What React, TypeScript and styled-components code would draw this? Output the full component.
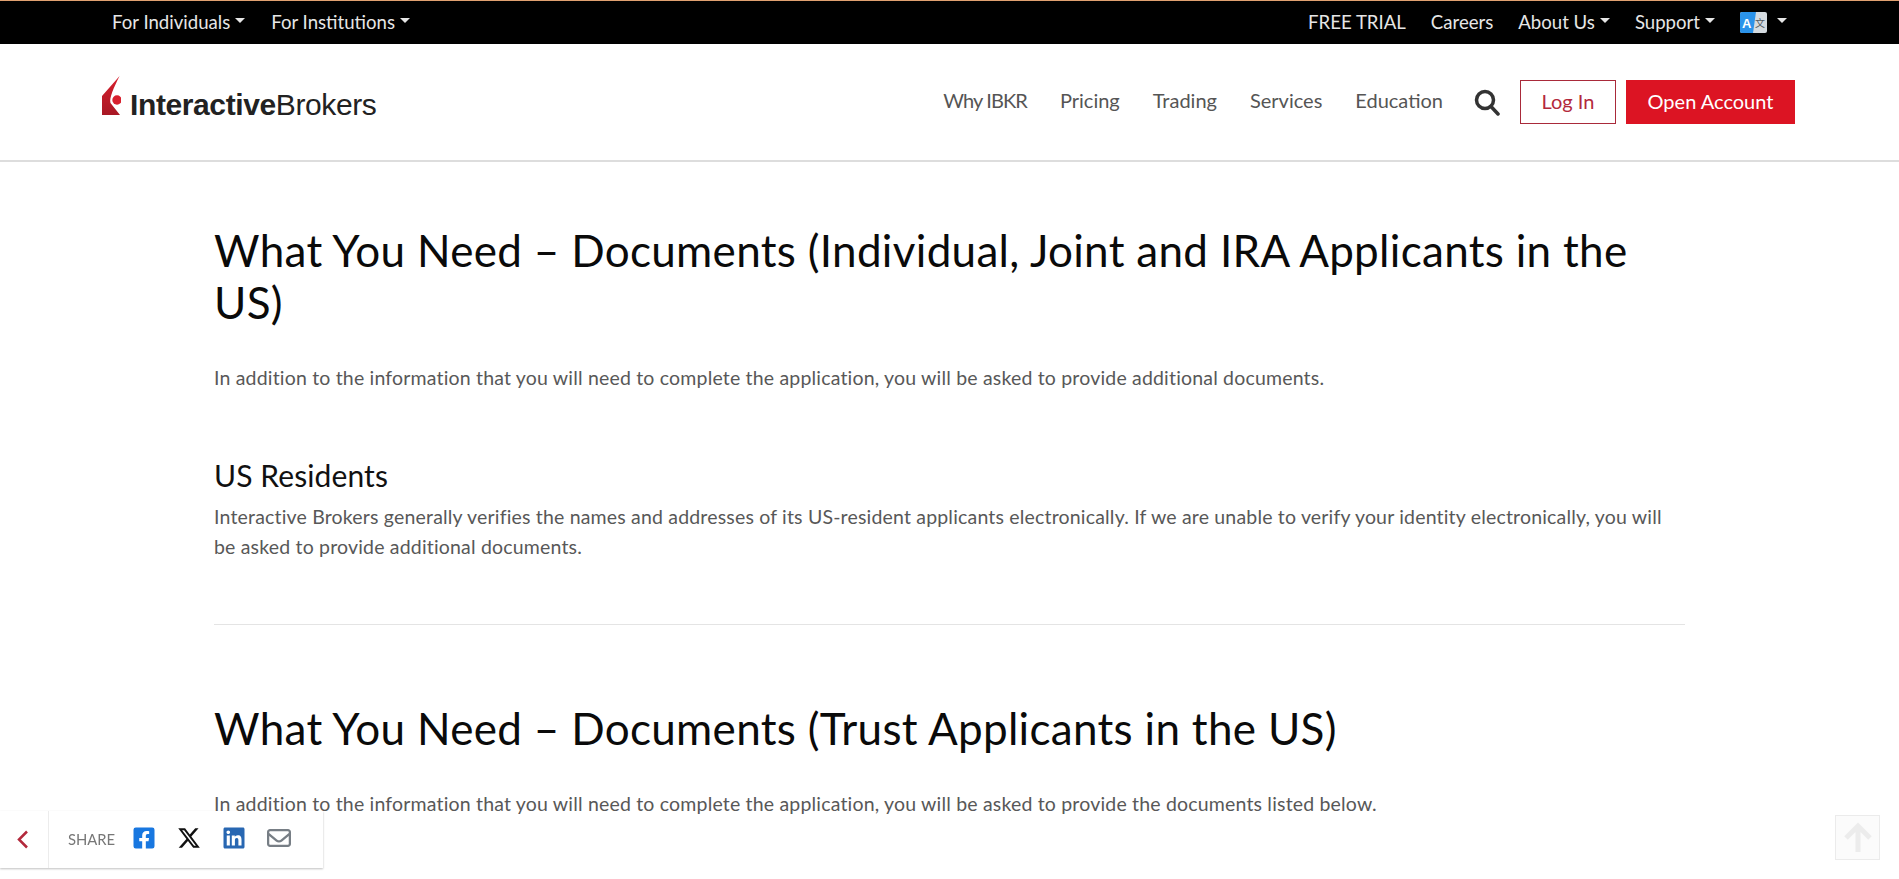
import React from "react";
import styled, { createGlobalStyle } from "styled-components";
import { FaXTwitter, FaLinkedin, FaRegEnvelope } from "react-icons/fa6";
import { FaFacebookSquare } from "react-icons/fa";

const Global = createGlobalStyle`
  html, body { margin: 0; padding: 0; height: 100%; overflow: hidden; background: #fff; }
  body { font-family: Lato, "Open Sans", sans-serif; }
  * { box-sizing: border-box; }
`;

const TopBar = styled.div`
  height: 44px;
  background: #000;
  border-top: 1px solid #e0a070;
  display: flex;
  align-items: center;
  justify-content: space-between;
  padding: 0 112px 1px 112px;
`;
const TopGroup = styled.div<{ $gap: number }>`
  display: flex;
  align-items: center;
  gap: ${(p) => p.$gap}px;
`;
const TopLink = styled.a`
  color: #e6e6e6;
  font-size: 18.6px;
  white-space: nowrap;
  display: inline-flex;
  align-items: center;
`;
const Caret = styled.span`
  display: inline-block;
  margin-left: 5px;
  margin-top: -3px;
  border-top: 5px solid currentColor;
  border-left: 5px solid transparent;
  border-right: 5px solid transparent;
`;
const LangCaret = styled(Caret)`
  color: #e6e6e6;
  margin-left: 10px;
  margin-top: -4px;
`;
const Lang = styled.span`
  display: inline-flex;
  align-items: center;
`;
const Header = styled.header`
  height: 118px;
  border-bottom: 2px solid #ddd;
  display: flex;
  align-items: center;
  justify-content: space-between;
  padding: 0 104px 1px 102px;
`;
const Logo = styled.div`
  display: flex;
  align-items: flex-end;
  gap: 9px;
  margin-top: -12px;
`;
const Wordmark = styled.span`
  font-family: "Liberation Sans", Arial, sans-serif;
  font-size: 30px;
  line-height: 30px;
  letter-spacing: -0.39px;
  color: #222;
  margin-bottom: -4.5px;
  b { font-weight: 700; }
`;
const Nav = styled.nav`
  display: flex;
  align-items: center;
`;
const NavLink = styled.a<{ $spacing?: number }>`
  color: #555;
  font-size: 20px;
  letter-spacing: ${(p) => p.$spacing ?? 0}px;
  margin-right: 33px;
  margin-bottom: 3px;
  white-space: nowrap;
`;
const SearchIcon = styled.svg`
  width: 28px;
  height: 28px;
  margin-left: -3px;
  margin-right: 19px;
  display: block;
`;
const LoginButton = styled.a`
  width: 96px;
  height: 44px;
  border: 1px solid #a92a3a;
  color: #b3293c;
  font-size: 20px;
  padding-bottom: 2px;
  display: flex;
  align-items: center;
  justify-content: center;
  margin-right: 10px;
`;
const OpenButton = styled.a`
  width: 169px;
  height: 44px;
  background: #dc1423;
  color: #fff;
  font-size: 20px;
  padding-bottom: 2px;
  display: flex;
  align-items: center;
  justify-content: center;
`;
const Main = styled.main`
  padding: 62px 214px 0 214px;
`;
const Title = styled.h1`
  margin: 0;
  font-weight: 400;
  font-size: 44px;
  line-height: 52px;
  letter-spacing: 0.31px;
  color: #0a0a0a;
`;
const Para = styled.p<{ $top: number }>`
  margin: ${(p) => p.$top}px 0 0;
  font-size: 19.5px;
  letter-spacing: 0.18px;
  line-height: 30px;
  color: #585858;
`;
const SubTitle = styled.h2`
  margin: 64px 0 0;
  font-weight: 400;
  font-size: 30px;
  line-height: 36px;
  letter-spacing: 0.1px;
  color: #111;
`;
const Rule = styled.hr`
  border: 0;
  border-top: 1px solid #e4e4e4;
  margin: 62px 0 77px;
`;
const ShareBar = styled.div`
  position: fixed;
  left: 0;
  bottom: 11px;
  width: 323px;
  height: 57px;
  background: #fff;
  display: flex;
  align-items: center;
  box-shadow: 0 1px 2px rgba(0, 0, 0, 0.25);
`;
const Back = styled.div`
  width: 49px;
  height: 100%;
  border-right: 1px solid #ececec;
  display: flex;
  align-items: center;
  justify-content: center;
  margin-right: 19px;
  padding-right: 3px;
`;
const ShareLabel = styled.span`
  font-size: 14.8px;
  color: #777;
  width: 64px;
  margin-top: -2px;
`;
const ShareIcon = styled.span<{ $color: string; $w: number }>`
  color: ${(p) => p.$color};
  width: ${(p) => p.$w}px;
  display: flex;
  font-size: 24px;
  margin-top: -4px;
`;
const TopButton = styled.div`
  position: fixed;
  left: 1835px;
  top: 815px;
  width: 45px;
  height: 45px;
  border: 1px solid #ebebeb;
  background: #fbfbfb;
  display: flex;
  align-items: center;
  justify-content: center;
`;

export default function App() {
  return (
    <>
      <Global />
      <TopBar>
        <TopGroup $gap={26}>
          <TopLink>For Individuals<Caret /></TopLink>
          <TopLink>For Institutions<Caret /></TopLink>
        </TopGroup>
        <TopGroup $gap={25}>
          <TopLink>FREE TRIAL</TopLink>
          <TopLink>Careers</TopLink>
          <TopLink>About Us<Caret /></TopLink>
          <TopLink>Support<Caret /></TopLink>
          <Lang>
            <svg width="27" height="21" viewBox="0 0 27 21">
              <rect width="27" height="21" rx="2" fill="#d5dbe0" />
              <path d="M2 0H16L13 21H2a2 2 0 0 1-2-2V2a2 2 0 0 1 2-2Z" fill="#2b93ea" />
              <text x="2" y="15.500" fontFamily="Liberation Sans" fontWeight="700" fontSize="13" fill="#fff">A</text>
              <text x="15" y="14.500" fontFamily="Noto Sans CJK SC" fontSize="10" fill="#50585f">文</text>
            </svg>
            <LangCaret />
          </Lang>
        </TopGroup>
      </TopBar>
      <Header>
        <Logo>
          <svg width="19" height="39" viewBox="0 0 19 39">
            <defs>
              <linearGradient id="lg" x1="0" y1="0" x2="0" y2="1">
                <stop offset="0" stopColor="#d8202e" />
                <stop offset="1" stopColor="#a81824" />
              </linearGradient>
            </defs>
            <path d="M17.600 0 0 20V39H18L8.500 27C7 22 12 11 17.600 0Z" fill="url(#lg)" />
            <circle cx="15" cy="24" r="4.700" fill="#d8202e" />
          </svg>
          <Wordmark><b>Interactive</b>Brokers</Wordmark>
        </Logo>
        <Nav>
          <NavLink $spacing={-0.9}>Why IBKR</NavLink>
          <NavLink>Pricing</NavLink>
          <NavLink>Trading</NavLink>
          <NavLink>Services</NavLink>
          <NavLink>Education</NavLink>
          <SearchIcon viewBox="0 0 28 28" fill="none" stroke="#333" strokeWidth="3.500">
            <circle cx="12" cy="12" r="8.500" />
            <path d="M18 18.500 25 26" strokeLinecap="round" />
          </SearchIcon>
          <LoginButton>Log In</LoginButton>
          <OpenButton>Open Account</OpenButton>
        </Nav>
      </Header>
      <Main>
        <Title>What You Need – Documents (Individual, Joint and IRA Applicants in the US)</Title>
        <Para $top={35}>In addition to the information that you will need to complete the application, you will be asked to provide additional documents.</Para>
        <SubTitle>US Residents</SubTitle>
        <Para $top={9}>Interactive Brokers generally verifies the names and addresses of its US-resident applicants electronically. If we are unable to verify your identity electronically, you will be asked to provide additional documents.</Para>
        <Rule />
        <Title>What You Need – Documents (Trust Applicants in the US)</Title>
        <Para $top={35}>In addition to the information that you will need to complete the application, you will be asked to provide the documents listed below.</Para>
      </Main>
      <ShareBar>
        <Back>
          <svg width="13" height="19" viewBox="0 0 13 19" fill="none" stroke="#b3293c" strokeWidth="2.500">
            <path d="M11 1.500 3 9.500l8 8" />
          </svg>
        </Back>
        <ShareLabel>SHARE</ShareLabel>
        <ShareIcon $color="#1877e0" $w={45}><FaFacebookSquare /></ShareIcon>
        <ShareIcon $color="#111" $w={45}><FaXTwitter /></ShareIcon>
        <ShareIcon $color="#2867b2" $w={45}><FaLinkedin /></ShareIcon>
        <ShareIcon $color="#777e85" $w={24}><FaRegEnvelope /></ShareIcon>
      </ShareBar>
      <TopButton>
        <svg width="32" height="32" viewBox="0 0 32 32" fill="none" stroke="#ececec" strokeWidth="5">
          <path d="M16 30V6M4 16 16 4l12 12" />
        </svg>
      </TopButton>
    </>
  );
}
